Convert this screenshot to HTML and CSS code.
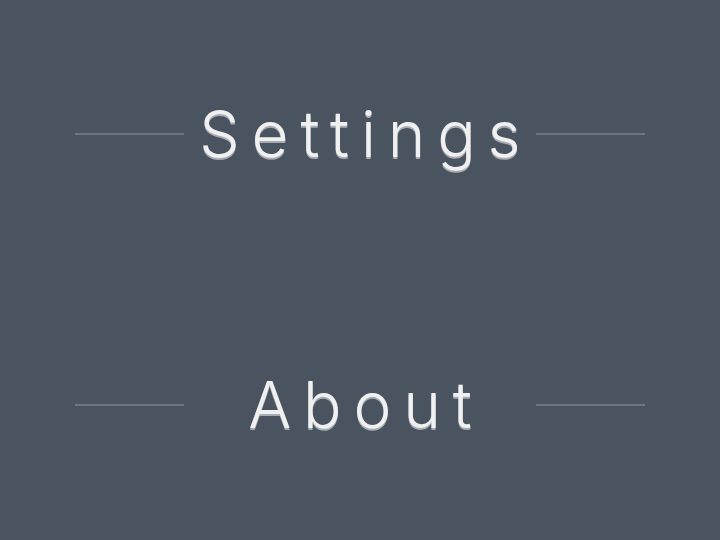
FILE: index.html
```html
<!DOCTYPE html>
<html>
<head>
    <title>Menu</title>
    <link rel="stylesheet" href="styles.css">
</head>
<body>
    <div class="menu">
        <div class="menu-row">
            <span class="rule"></span>
            <h2 class="menu-title">Settings</h2>
            <span class="rule"></span>
        </div>
        <div class="menu-row">
            <span class="rule"></span>
            <h2 class="menu-title">About</h2>
            <span class="rule"></span>
        </div>
    </div>
</body>
</html>
```

FILE: styles.css
```css
html, body { margin: 0; height: 100%; }
body { background: #4a5360; font-family: Inter, "Liberation Sans", sans-serif; }
.menu { padding: 94px 75px 0 75px; display: flex; flex-direction: column; gap: 191px; }
.menu-row { display: flex; align-items: center; height: 80px; }
.rule { flex: 0 0 109px; height: 2px; background: #6b7582; }
.menu-title { flex: 1; margin: 0; text-align: center; color: #f0f0f0; font-weight: 300; font-size: 64px; letter-spacing: 0.185em; text-indent: 0.185em; line-height: 78px; text-shadow: 0 2px 0 #a7acb3; }
```
